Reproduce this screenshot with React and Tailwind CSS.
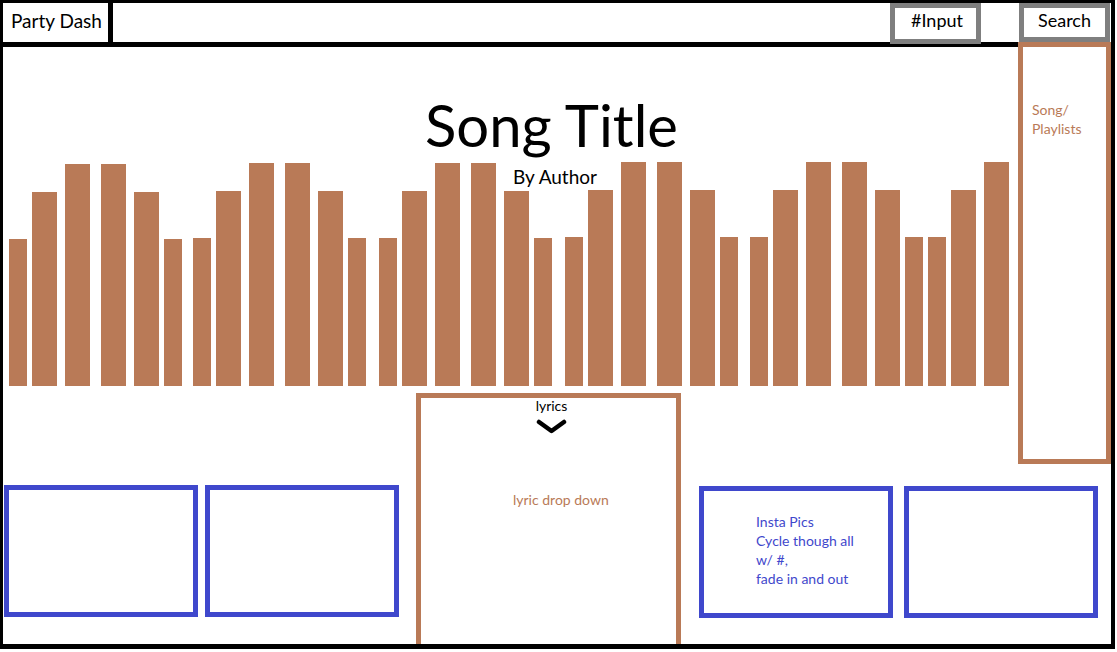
const bars = [
  [9, 18, 239], [32, 25, 192], [65, 25, 164], [101, 25, 164], [134, 25, 192], [164, 18, 239],
  [193, 18, 238], [216, 25, 191], [249, 25, 163], [285, 25, 163], [318, 25, 191], [348, 18, 238],
  [379, 18, 238], [402, 25, 191], [435, 25, 163], [471, 25, 163], [504, 25, 191], [534, 18, 238],
  [565, 18, 237], [588, 25, 190], [621, 25, 162], [657, 25, 162], [690, 25, 190], [720, 18, 237],
  [750, 18, 237], [773, 25, 190], [806, 25, 162], [842, 25, 162], [875, 25, 190], [905, 18, 237],
  [928, 18, 237], [951, 25, 190], [984, 25, 162],
];

function Visualizer() {
  // bar coordinates are page pixels; svg sits at x=3, y=162
  return (
    <svg width="1015" height="225" viewBox="0 0 1015 225" className="block -mt-[24px]">
      {bars.map(([x, w, top], i) => (
        <rect key={i} x={x - 3} y={top - 162} width={w} height={386 - top} fill="#b97a57" />
      ))}
    </svg>
  );
}

function PicBox({ children }) {
  return (
    <div className="w-[194px] h-[132px] border-[5px] border-[#3f48cc] shrink-0">
      {children}
    </div>
  );
}

export default function App() {
  return (
    <div className="w-[1117px] h-[652px] bg-white" style={{ fontFamily: 'Lato, "Noto Sans", sans-serif' }}>
      <div className="w-[1115px] h-[649px] border-t-[3px] border-l-[3px] border-r-4 border-b-[5px] border-black flex flex-col overflow-hidden">
        <header className="h-[44px] shrink-0 border-b-[5px] border-black flex">
          <div className="w-[110px] border-r-[5px] border-black flex items-center pl-[8px] pb-[2px] text-[19px] text-black">
            Party Dash
          </div>
          <div className="flex-1" />
          <div className="w-[91px] h-[41px] shrink-0 border-[5px] border-[#7f7f7f] bg-white flex items-center justify-center pb-[6px] pl-[3px] text-[18px] text-black">
            #Input
          </div>
          <div className="w-[38px] shrink-0" />
          <div className="w-[91px] h-[39px] shrink-0 border-[5px] border-[#7f7f7f] bg-white flex items-center justify-center pb-[4px] text-[18px] text-black">
            Search
          </div>
          <div className="w-[1px] shrink-0" />
        </header>

        <main className="flex-1 grid grid-cols-[413px_265px_337px_93px] grid-rows-[346px_71px_180px]">
          <section className="col-span-3 row-start-1 flex flex-col">
            <div className="pt-[49px] pl-[82px] flex flex-col items-center relative z-10">
              <h1 className="text-[58px] leading-none text-black">Song Title</h1>
              <p className="mt-[13px] ml-[7px] text-[19px] leading-none text-black">By Author</p>
            </div>
            <Visualizer />
          </section>

          <aside className="col-start-4 row-start-1 row-span-2 -mt-[5px] border-[5px] border-[#b97a57] bg-white relative z-10 pt-[53px] pl-[9px] text-[14px] leading-[19px] text-[#b97a57]">
            Song/
            <br />
            Playlists
          </aside>

          <div className="col-start-2 row-start-2 row-span-2 border-x-[5px] border-t-[5px] border-[#b97a57] flex flex-col">
            <div className="flex flex-col items-center pl-[6px]">
              <span className="text-[14px] leading-[16px] text-black">lyrics</span>
              <svg width="31" height="15" viewBox="0 0 31 15" className="mt-[5px]">
                <path d="M3 3 L15.5 12 L28 3" fill="none" stroke="#000" strokeWidth="4.5" strokeLinecap="round" strokeLinejoin="round" />
              </svg>
            </div>
            <p className="mt-[57px] ml-[92px] text-[14px] leading-[18px] text-[#b97a57]">lyric drop down</p>
          </div>

          <div className="col-start-1 row-start-3 flex gap-[7px] pl-[1px] pt-[21px]">
            <PicBox />
            <PicBox />
          </div>

          <div className="col-start-3 col-span-2 row-start-3 flex gap-[11px] pl-[18px] pt-[22px]">
            <PicBox>
              <div className="pt-[21px] pl-[52px] text-[14px] leading-[19px] text-[#3f48cc]">
                Insta Pics
                <br />
                Cycle though all
                <br />
                w/ #,
                <br />
                fade in and out
              </div>
            </PicBox>
            <PicBox />
          </div>
        </main>
      </div>
    </div>
  );
}
